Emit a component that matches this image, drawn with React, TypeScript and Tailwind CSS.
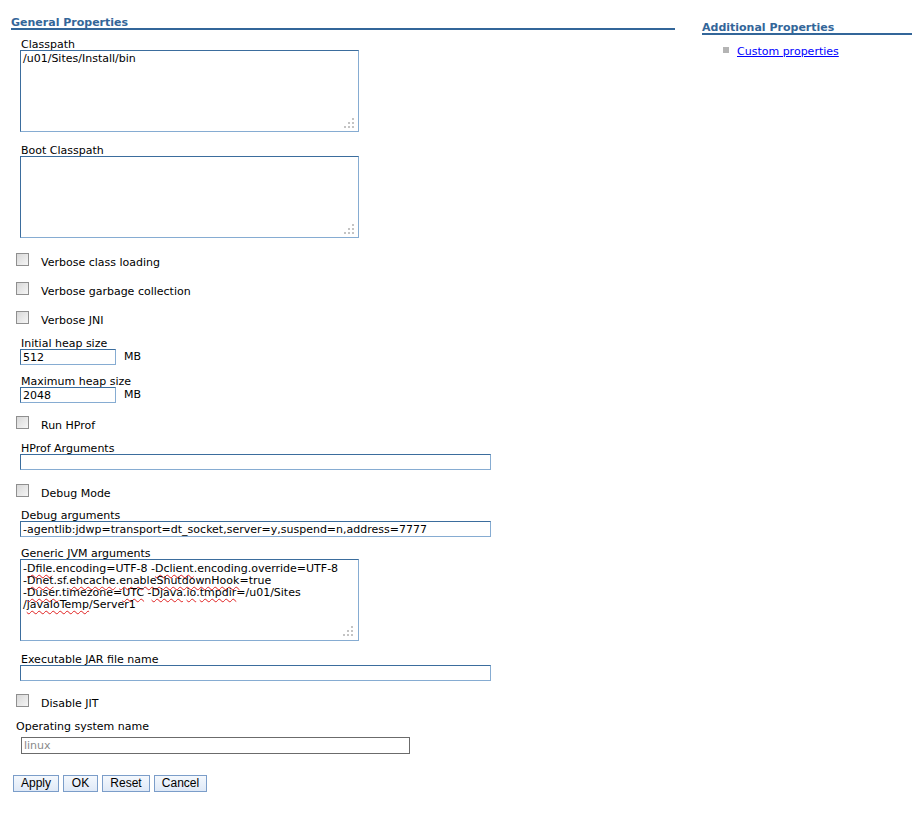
import type { ReactNode } from "react";

const fieldBorder =
  "border border-t-[#3b6d9d] border-l-[#3b6d9d] border-r-[#86acd2] border-b-[#86acd2] bg-white";

function Grip() {
  return (
    <svg
      className="pointer-events-none absolute bottom-[3px] right-[4px]"
      width="11"
      height="11"
      viewBox="0 0 11 11"
      aria-hidden
    >
      <rect x="8" y="0" width="2" height="2" fill="#c4c4c4" />
      <rect x="4" y="4" width="2" height="2" fill="#c4c4c4" />
      <rect x="8" y="4" width="2" height="2" fill="#c4c4c4" />
      <rect x="0" y="8" width="2" height="2" fill="#c4c4c4" />
      <rect x="4" y="8" width="2" height="2" fill="#c4c4c4" />
      <rect x="8" y="8" width="2" height="2" fill="#c4c4c4" />
    </svg>
  );
}

function Label({ text, className = "" }: { text: string; className?: string }) {
  return <div className={`ml-[10px] h-[12px] leading-[14px] ${className}`}>{text}</div>;
}

function TextArea({ value }: { value?: string }) {
  return (
    <div className="relative ml-[9px] w-[339px]">
      <textarea
        readOnly
        value={value ?? ""}
        className={`${fieldBorder} block h-[82px] w-full resize-none px-[2px] pt-[2px] leading-[12px] outline-none`}
      />
      <Grip />
    </div>
  );
}

function TextInput({ value = "", width = "w-[471px]" }: { value?: string; width?: string }) {
  return (
    <input
      readOnly
      value={value}
      className={`${fieldBorder} ml-[9px] block h-[16px] ${width} px-[2px] leading-[12px] outline-none`}
    />
  );
}

function CheckRow({ text, className = "" }: { text: string; className?: string }) {
  return (
    <div className={`ml-[5px] flex items-start ${className}`}>
      <span className="h-[13px] w-[13px] border border-[#8f8f8f] bg-gradient-to-br from-[#d8d8d8] to-[#f6f6f6]" />
      <span className="ml-[12px] mt-[4px] leading-[12px]">{text}</span>
    </div>
  );
}

function Spell({ children }: { children: ReactNode }) {
  return (
    <span className="underline decoration-[#e02020] decoration-wavy decoration-1 underline-offset-[2px]">
      {children}
    </span>
  );
}

function Btn({ label, width }: { label: string; width: string }) {
  return (
    <button
      className={`h-[17px] ${width} border border-[#7b9dc9] bg-gradient-to-b from-[#f4f8fd] to-[#dfe9f7] font-['Liberation_Sans',Arial,sans-serif] text-[12px] leading-[15px] text-black`}
    >
      {label}
    </button>
  );
}

export default function App() {
  return (
    <div className="flex min-h-[822px] w-[912px] bg-white pt-[17px] font-['DejaVu_Sans',Verdana,sans-serif] text-[11px] text-black">
      <div className="ml-[11px] w-[664px]">
        <h2 className="border-b-2 border-[#336699] text-[11px] font-bold leading-[11px] text-[#336699]">
          General Properties
        </h2>

        <Label text="Classpath" className="mt-[8px]" />
        <TextArea value="/u01/Sites/Install/bin" />

        <Label text="Boot Classpath" className="mt-[12px]" />
        <TextArea />

        <CheckRow text="Verbose class loading" className="mt-[15px]" />
        <CheckRow text="Verbose garbage collection" className="mt-[13px]" />
        <CheckRow text="Verbose JNI" className="mt-[13px]" />

        <Label text="Initial heap size" className="mt-[10px]" />
        <div className="flex items-center">
          <TextInput value="512" width="w-[96px]" />
          <span className="ml-[8px] leading-[12px]">MB</span>
        </div>

        <Label text="Maximum heap size" className="mt-[10px]" />
        <div className="flex items-center">
          <TextInput value="2048" width="w-[96px]" />
          <span className="ml-[8px] leading-[12px]">MB</span>
        </div>

        <CheckRow text="Run HProf" className="mt-[13px]" />

        <Label text="HProf Arguments" className="mt-[10px]" />
        <TextInput />

        <CheckRow text="Debug Mode" className="mt-[14px]" />

        <Label text="Debug arguments" className="mt-[9px]" />
        <TextInput value="-agentlib:jdwp=transport=dt_socket,server=y,suspend=n,address=7777" />

        <Label text="Generic JVM arguments" className="mt-[10px]" />
        <div className={`${fieldBorder} relative ml-[9px] h-[82px] w-[339px] px-[2px] pt-[3px] leading-[12px]`}>
          <div>
            -<Spell>Dfile</Spell>.encoding=UTF-8 -<Spell>Dclient</Spell>.encoding.override=UTF-8
          </div>
          <div>
            -<Spell>Dnet</Spell>.sf.<Spell>ehcache</Spell>.<Spell>enableShutdownHook</Spell>=true
          </div>
          <div>
            -<Spell>Duser</Spell>.timezone=<Spell>UTC</Spell> -<Spell>Djava</Spell>.<Spell>io</Spell>.
            <Spell>tmpdir</Spell>=/u01/Sites
          </div>
          <div>
            /<Spell>javaIoTemp</Spell>/Server1
          </div>
          <Grip />
        </div>

        <Label text="Executable JAR file name" className="mt-[12px]" />
        <TextInput />

        <CheckRow text="Disable JIT" className="mt-[13px]" />

        <div className="ml-[5px] mt-[10px] h-[12px] leading-[14px]">Operating system name</div>
        <input
          readOnly
          value="linux"
          className="ml-[10px] mt-[5px] block h-[17px] w-[389px] border border-[#6b6b6b] bg-white px-[2px] leading-[13px] text-[#8a8a8a] outline-none"
        />

        <div className="ml-[2px] mt-[21px] flex gap-[4px]">
          <Btn label="Apply" width="w-[46px]" />
          <Btn label="OK" width="w-[35px]" />
          <Btn label="Reset" width="w-[48px]" />
          <Btn label="Cancel" width="w-[53px]" />
        </div>
      </div>

      <div className="ml-[27px] mt-[5px] flex-1">
        <h2 className="border-b-2 border-[#336699] text-[11px] font-bold leading-[11px] text-[#336699]">
          Additional Properties
        </h2>
        <ul className="ml-[21px] mt-[11px]">
          <li className="flex items-start">
            <span className="mt-[1px] h-[6px] w-[6px] bg-[#b4b4b4]" />
            <a href="#" className="ml-[8px] leading-[12px] text-[#0000ff] underline">
              Custom properties
            </a>
          </li>
        </ul>
      </div>
    </div>
  );
}
